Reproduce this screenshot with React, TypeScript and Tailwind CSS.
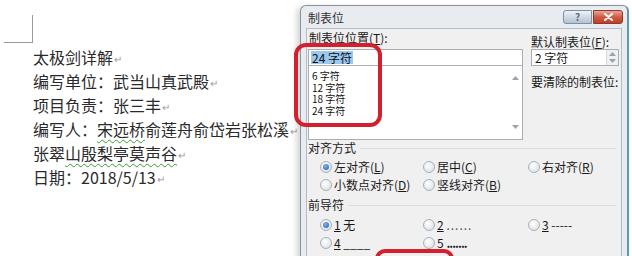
import React from "react";

const Ret = () => (
  <span className="ml-[1px] text-[10px] leading-none text-[#9a9a9a] align-[1px]">↵</span>
);

const Wavy = ({ children }: { children: React.ReactNode }) => (
  <span className="underline decoration-wavy decoration-[#3a9a3a] decoration-1 underline-offset-[3px]">
    {children}
  </span>
);

const Doc = () => (
  <div className="pl-[4px] pt-[15px]">
    <div className="w-[29px] h-[28px] border-r border-b border-[#9a9a9a]" />
    <div className="pl-[29px] mt-[2px] text-[16px] leading-[24px] text-[#2a2a2a] whitespace-nowrap">
      <div>
        太极剑详解
        <Ret />
      </div>
      <div>
        编写单位：武当山真武殿
        <Ret />
      </div>
      <div>
        项目负责：张三丰
        <Ret />
      </div>
      <div>
        编写人：<Wavy>宋远桥</Wavy>俞莲舟俞岱岩张松溪
        <Ret />
      </div>
      <div>
        张翠<Wavy>山殷梨亭莫声谷</Wavy>
        <Ret />
      </div>
      <div>
        日期：2018/5/13
        <Ret />
      </div>
    </div>
  </div>
);

const Radio = ({ checked = false }: { checked?: boolean }) => (
  <span className="w-[12px] h-[12px] shrink-0 rounded-full border border-[#a9b1b9] bg-[radial-gradient(circle_at_40%_35%,#ffffff,#d6dbe0)] flex items-center justify-center">
    {checked && (
      <span className="w-[6px] h-[6px] rounded-full bg-[radial-gradient(circle_at_40%_35%,#7fb4ea,#1f5fae)]" />
    )}
  </span>
);

const Option = ({
  checked,
  children,
}: {
  checked?: boolean;
  children: React.ReactNode;
}) => (
  <div className="flex items-center gap-[2px] whitespace-nowrap">
    <Radio checked={checked} />
    <span>{children}</span>
  </div>
);

const Heading = ({ children }: { children: React.ReactNode }) => (
  <div className="h-[16px] flex items-center gap-[4px] pr-[4px]">
    <span className="text-[#1a1a1a]">{children}</span>
    <span className="flex-1 h-px bg-[#d8dde2]" />
  </div>
);

const Up = () => (
  <svg width="7" height="4" viewBox="0 0 7 4">
    <path d="M0 4 L3.5 0 L7 4 Z" fill="#9aa3ab" />
  </svg>
);

const Down = () => (
  <svg width="7" height="4" viewBox="0 0 7 4">
    <path d="M0 0 L3.5 4 L7 0 Z" fill="#9aa3ab" />
  </svg>
);

const TabDialog = () => (
  <div className="absolute left-[300px] top-[5px] w-[329px] h-[262px] rounded-t-[6px] border border-[#8a939c] border-r-[2px] border-r-[#5f9aaa] bg-[#e8ebef] shadow-[-3px_2px_6px_rgba(0,0,0,0.18)] text-[12px] leading-[12px] text-[#1a1a1a]">
    {/* title bar */}
    <div className="h-[22px] flex items-start pl-[7px] pr-[4px]">
      <span className="mt-[6px] text-[#333]">制表位</span>
      <div className="ml-auto mt-[4px] flex gap-[1px]">
        <div className="w-[29px] h-[14px] rounded-l-[3px] border border-[#7d8fa3] bg-gradient-to-b from-[#eef2f7] to-[#b3c2d3] flex items-center justify-center text-[10px] font-bold text-[#5a6b80]">
          ?
        </div>
        <div className="w-[30px] h-[14px] rounded-r-[3px] border border-[#8c3a2c] bg-gradient-to-b from-[#e9a597] via-[#d05a43] to-[#c0402a] flex items-center justify-center">
          <svg width="9" height="8" viewBox="0 0 9 8">
            <path d="M1 1 L8 7 M8 1 L1 7" stroke="#fff" strokeWidth="2" strokeLinecap="round" />
          </svg>
        </div>
      </div>
    </div>

    {/* content */}
    <div className="mx-[5px] h-full bg-[#f0f0f0] border border-[#b4bcc5] pl-[1px] pr-[1px] pt-[3px]">
      <div className="flex">
        {/* left column */}
        <div className="w-[215px]">
          <div className="h-[12px] pl-[1px]">
            制表位位置(<span className="underline">T</span>):
          </div>
          <div className="mt-[5px] h-[17px] border border-[#abadb3] bg-white flex items-center px-[2px]">
            <span className="bg-[#99c9ef] px-[1px] leading-[13px] text-[#111]">24 字符</span>
          </div>
          <div className="h-[74px] border border-t-0 border-[#abadb3] bg-white flex">
            <div className="pl-[3px] pt-[4px] text-[10px] leading-[11.5px] text-[#111]">
              <div>6 字符</div>
              <div>12 字符</div>
              <div>18 字符</div>
              <div>24 字符</div>
            </div>
            <div className="ml-auto w-[13px] flex flex-col items-center justify-between pt-[10px] pb-[10px]">
              <Up />
              <Down />
            </div>
          </div>
        </div>

        {/* right column */}
        <div className="ml-[8px] flex-1 pr-[1px]">
          <div className="mt-[4px] h-[12px]">
            默认制表位(<span className="underline">F</span>):
          </div>
          <div className="mt-[1px] h-[17px] border border-[#abadb3] bg-white flex items-center">
            <span className="pl-[3px]">2 字符</span>
            <div className="ml-auto w-[12px] h-full border-l border-[#d5d9de] bg-[#eef1f4] flex flex-col items-center justify-center gap-[3px]">
              <Up />
              <Down />
            </div>
          </div>
          <div className="mt-[10px] h-[12px]">要清除的制表位:</div>
        </div>
      </div>

      <Heading>对齐方式</Heading>
      <div className="mt-[2px] pl-[12px]">
        <div className="h-[18px] grid grid-cols-[103px_105px_1fr] items-center">
          <Option checked>
            左对齐(<span className="underline">L</span>)
          </Option>
          <Option>
            居中(<span className="underline">C</span>)
          </Option>
          <Option>
            右对齐(<span className="underline">R</span>)
          </Option>
        </div>
        <div className="h-[18px] grid grid-cols-[103px_105px_1fr] items-center">
          <Option>
            小数点对齐(<span className="underline">D</span>)
          </Option>
          <Option>
            竖线对齐(<span className="underline">B</span>)
          </Option>
        </div>
      </div>

      <div className="mt-[3px]">
        <Heading>前导符</Heading>
      </div>
      <div className="mt-[3px] pl-[12px]">
        <div className="h-[18px] grid grid-cols-[103px_105px_1fr] items-center">
          <Option checked>
            <span className="underline">1</span> 无
          </Option>
          <Option>
            <span className="underline">2</span> <span className="tracking-[1px] text-[#555]">......</span>
          </Option>
          <Option>
            <span className="underline">3</span> -----
          </Option>
        </div>
        <div className="h-[18px] grid grid-cols-[103px_105px_1fr] items-center">
          <Option>
            <span className="underline">4</span> ____
          </Option>
          <Option>
            <span className="underline">5</span> <span className="tracking-[-1px] font-bold">.......</span>
          </Option>
        </div>
      </div>
    </div>
  </div>
);

export default function App() {
  return (
    <div className="relative w-[632px] h-[256px] overflow-hidden bg-white font-['Noto_Sans_CJK_SC',sans-serif]">
      <Doc />
      <TabDialog />
      {/* red annotation marks */}
      <div className="absolute left-[294px] top-[43px] w-[88px] h-[84px] rounded-[12px] border-[4px] border-[#d3202e]" />
      <div className="absolute left-[375px] top-[249px] w-[79px] h-[24px] rounded-[10px] border-[4px] border-[#d3202e]" />
    </div>
  );
}
